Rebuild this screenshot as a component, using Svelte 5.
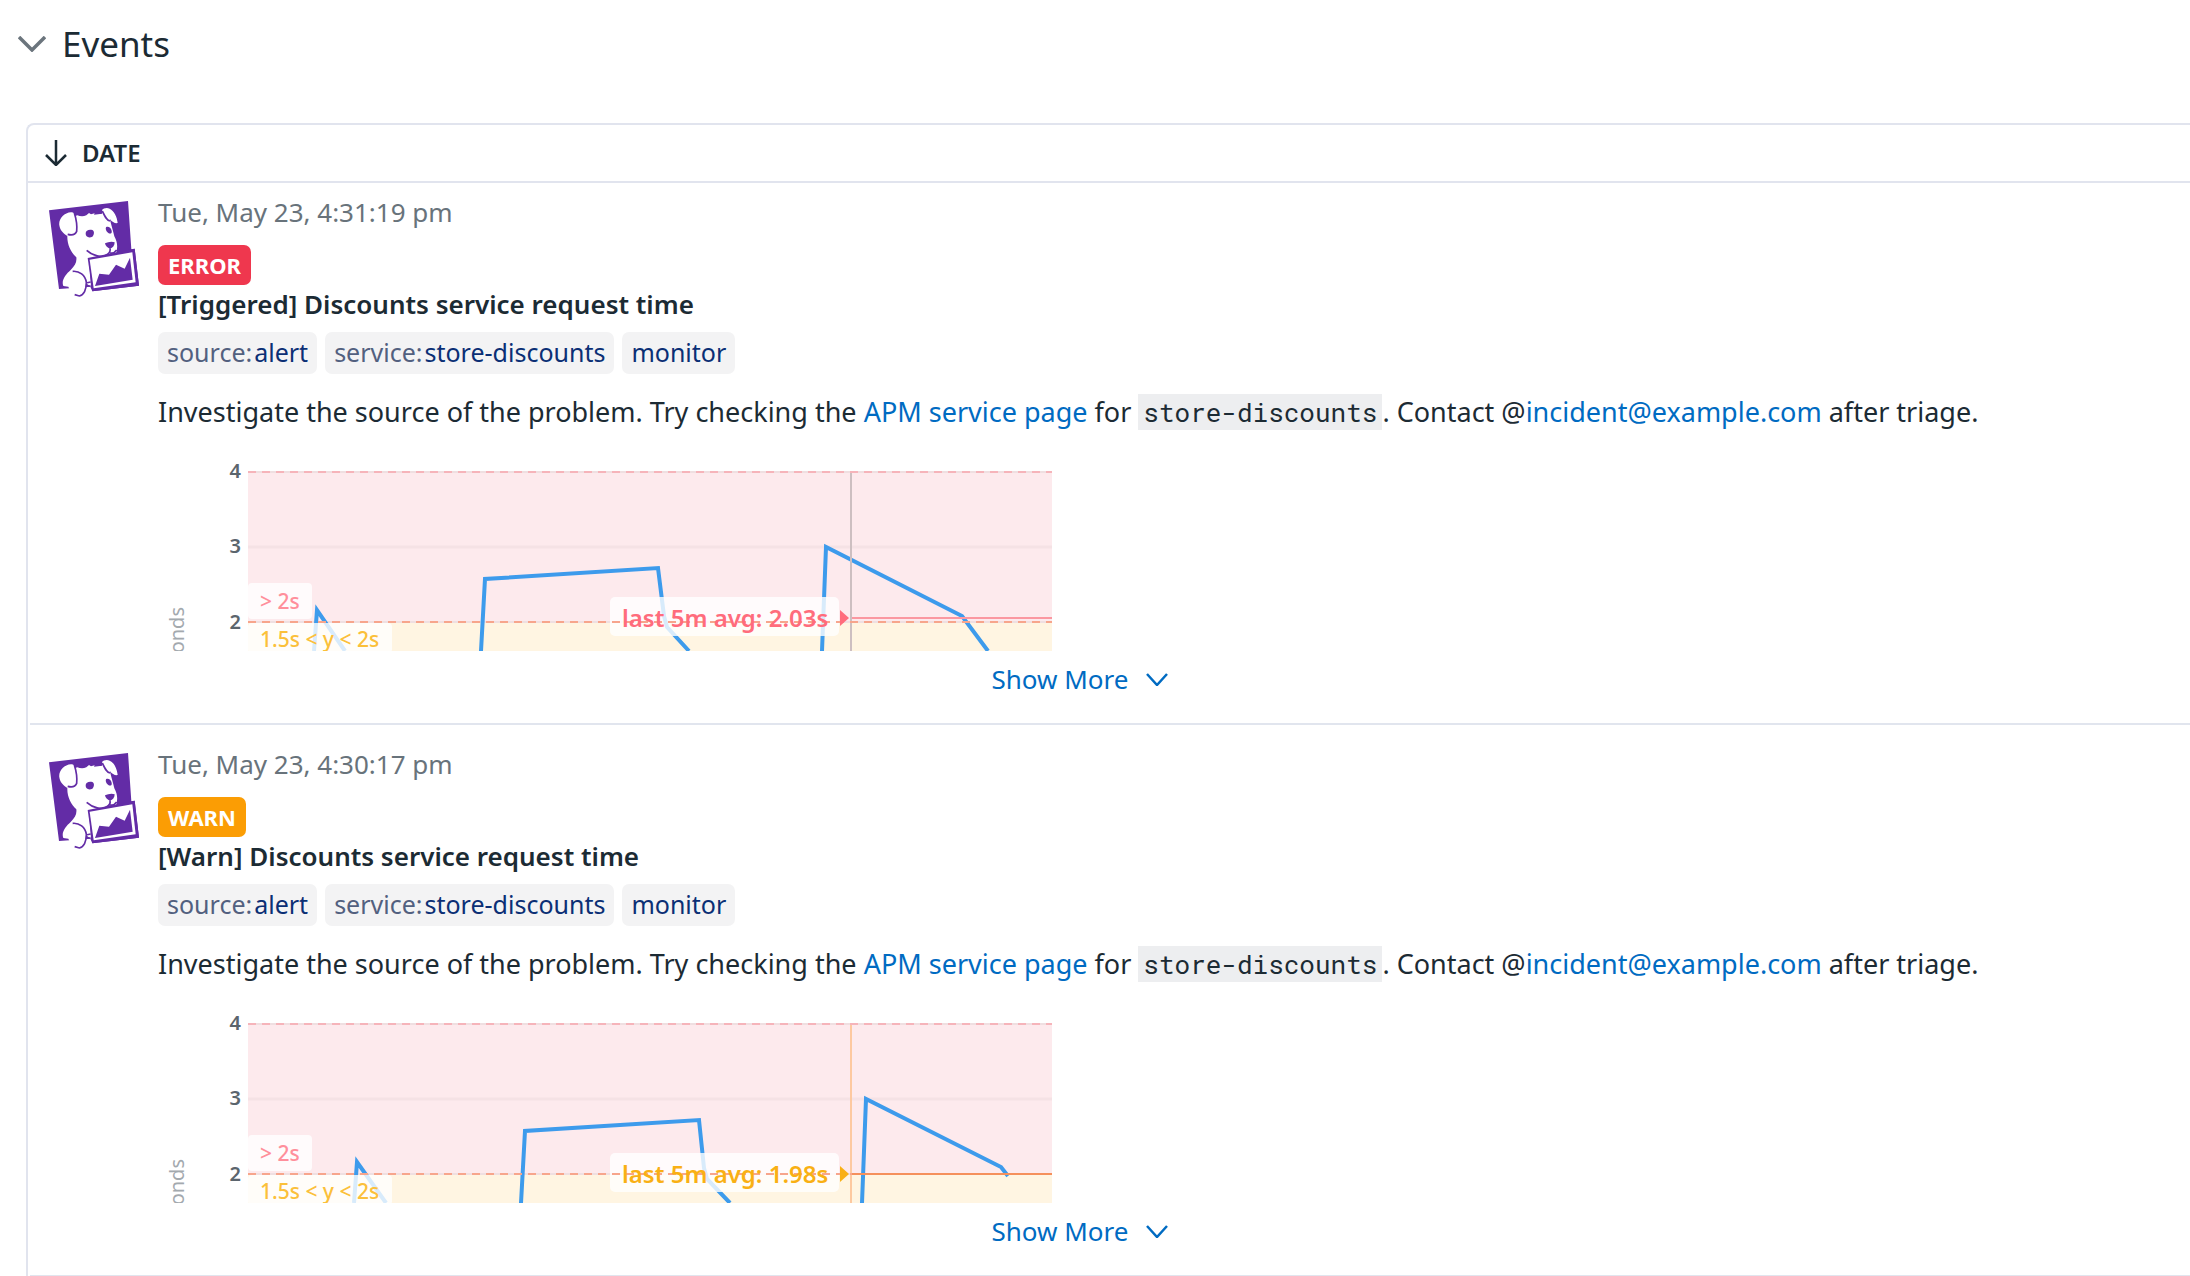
<script>
  const events = [
    {
      id: 'triggered',
      date: 'Tue, May 23, 4:31:19 pm',
      status: 'error',
      title: '[Triggered] Discounts service request time',
      chart: {
        series: [
          '156,195 159,154 187,195',
          '323,195 327,123 500,112 506,160 509,171 531,195',
          '664,195 668,91 804,160 830,195'
        ],
        average: 'last 5m avg: 2.03s',
        level: 162,
        boxTop: 141
      }
    },
    {
      id: 'warn',
      date: 'Tue, May 23, 4:30:17 pm',
      status: 'warn',
      title: '[Warn] Discounts service request time',
      chart: {
        series: [
          '196,195 199,154 228,195',
          '363,195 367,123 541,112 546,160 549,171 572,195',
          '704,195 708,91 843,159 850,168'
        ],
        average: 'last 5m avg: 1.98s',
        level: 166,
        boxTop: 145
      }
    }
  ];

  const tags = [
    { key: 'source:', value: 'alert' },
    { key: 'service:', value: 'store-discounts' },
    { key: '', value: 'monitor' }
  ];
</script>

{#snippet avatar()}
  <svg class="avatar" viewBox="84 60 276 294" aria-hidden="true">
    <path class="ink" d="M87 91 324 63 334 208 344 206 357 317 217 334 211 320 117 327Z" />
    <path class="paper" d="M118 136C115 118 132 98 153 97C160 96 163 100 166 108L172 106C180 109 190 110 199 106L207 99 213 103 224 100 222 104 240 102C247 104 249 97 246 90C250 84 262 82 269 86C282 92 291 109 293 129C286 131 276 126 269 116C274 135 279 151 283 169C293 187 293 202 289 219L275 222C263 227 250 231 236 232L207 236 213 320 198 310C196 328 188 341 172 343C158 340 149 332 145 320L130 318C123 301 137 283 152 270C164 257 171 248 169 232C154 218 141 195 142 168C130 161 120 151 118 136Z" />
    <path class="stroke" d="M163 99C169 118 172 135 170 154C165 166 154 166 143 163" />
    <path class="stroke" d="M247 93C255 110 260 121 270 123" />
    <path class="paper" d="M263 89C277 94 288 112 290 126C279 121 265 106 263 89Z" />
    <path class="ink" d="M197 160C197 151 207 147 217 150C224 153 223 165 217 170C207 175 196 171 197 160Z" />
    <path class="ink" d="M258 142C264 138 273 143 275 152C277 161 270 163 264 158C258 155 256 146 258 142Z" />
    <path class="ink" d="M255 190C264 186 275 183 284 187C284 197 278 204 270 206C262 203 256 198 255 190Z" />
    <path class="stroke" d="M200 211C218 227 246 235 259 225C267 221 272 214 270 205M270 218C276 221 284 218 290 210" />
    <path class="stroke" d="M158 274C178 272 196 286 199 307C200 329 191 345 178 348L164 344M198 309 212 306M200 318 212 318" />
    <path class="ink" d="M203 234 344 206 357 317 217 334Z" />
    <path class="paper" d="M209 239 337 217 347 307 221 325Z" />
    <path class="ink" d="M225 318 238 281 267 284 288 254 314 266 330 233 338 299Z" />
  </svg>
{/snippet}

{#snippet chart(event)}
  <svg
    class={['chart', event.status]}
    viewBox="0 0 894 195"
    role="img"
    aria-label="Request time in seconds, {event.chart.average}"
  >
    <rect class="zone-alert" x="90" y="16" width="804" height="150" />
    <rect class="zone-warn" x="90" y="166" width="804" height="29" />
    <path class="grid" d="M90 16H894M90 166H894" />
    <path class="grid wide" d="M90 91H894" />
    {#each event.chart.series as points}
      <polyline class="series" {points} />
    {/each}
    <path class="marker" d="M693 16V195" />
    <path class="level" d="M694 {event.chart.level}H894" />
    <rect class="plate" x="90" y="127" width="64" height="36" rx="4" />
    <rect class="plate" x="90" y="167" width="144" height="30" rx="4" />
    <rect class="plate" x="452" y={event.chart.boxTop} width="229" height="39" rx="5" />
    <path class="dash top" d="M90 16H894" />
    <path class="dash" d="M90 166H{event.status === 'warn' ? 694 : 894}" />
    <path class="pointer" d="M682 {event.chart.level - 8}L691 {event.chart.level}L682 {event.chart.level + 8}Z" />
    <text class="tick" x="83" y="22">4</text>
    <text class="tick" x="83" y="97">3</text>
    <text class="tick" x="83" y="173">2</text>
    <text class="unit" transform="translate(26 151) rotate(-90)">onds</text>
    <text class="range-alert" x="102" y="153">&gt; 2s</text>
    <text class="range-warn" x="102" y="191">1.5s &lt; y &lt; 2s</text>
    <text class="average" x="464" y={event.chart.boxTop + 30}>{event.chart.average}</text>
  </svg>
{/snippet}

<main>
  <h2>
    <button class="toggle" type="button" aria-expanded="true">
      <svg class="caret" viewBox="0 0 28 16" aria-hidden="true"><path d="M1 1 14 14 27 1" /></svg>
      Events
    </button>
  </h2>

  <table>
    <thead>
      <tr>
        <th scope="col" aria-sort="descending">
          <button class="sort" type="button">
            <svg class="arrow" viewBox="0 0 22 26" aria-hidden="true"><path d="M11 0V25M1 15 11 25 21 15" /></svg>
            DATE
          </button>
        </th>
      </tr>
    </thead>
    <tbody>
      {#each events as event (event.id)}
        <tr>
          <td>
            <article>
              {@render avatar()}
              <div class="body">
                <time>{event.date}</time>
                <span class={['badge', event.status]}>{event.status.toUpperCase()}</span>
                <h3>{event.title}</h3>
                <ul>
                  {#each tags as tag}
                    <li><span>{tag.key}</span>{tag.value}</li>
                  {/each}
                </ul>
                <p>
                  Investigate the source of the problem. Try checking the <a href="#apm">APM service page</a> for
                  <code>store-discounts</code>. Contact @<a href="mailto:incident@example.com">incident@example.com</a> after triage.
                </p>
                {@render chart(event)}
                <button class="more" type="button">
                  Show More
                  <svg viewBox="0 0 22 14" aria-hidden="true"><path d="M1 2 11 13 21 2" /></svg>
                </button>
              </div>
            </article>
          </td>
        </tr>
      {/each}
    </tbody>
  </table>
</main>

<style>
  :global(body) {
    margin: 0;
    background: #fff;
  }

  main {
    padding: 20px 0 0 18px;
    overflow: hidden;
    color: #1c2b34;
    font-family: 'Noto Sans', sans-serif;
    font-size: 26px;
    line-height: 36px;
  }

  h2,
  h3,
  p,
  ul {
    margin: 0;
    padding: 0;
  }

  button {
    display: flex;
    align-items: center;
    padding: 0;
    border: 0;
    background: none;
    color: inherit;
    font: inherit;
    cursor: pointer;
  }

  button path {
    fill: none;
    stroke: currentColor;
    stroke-width: 2.5;
  }

  h2 {
    margin-bottom: 55px;
    font-size: 35px;
    font-weight: 400;
    line-height: 48px;
  }

  .toggle {
    gap: 16px;
  }

  .caret {
    width: 28px;
    height: 16px;
    color: #6b757d;
  }

  .caret path {
    stroke-width: 3.5;
  }

  table {
    width: calc(100% - 8px);
    margin-left: 8px;
    border: solid #e1e4ee;
    border-width: 2px 0 0 2px;
    border-radius: 8px 0 0 0;
    border-spacing: 0;
  }

  th {
    height: 56px;
    padding: 0 0 0 17px;
    border-bottom: 2px solid #e1e4ee;
    font-size: 24px;
    font-weight: 600;
  }

  .sort {
    gap: 15px;
  }

  .arrow {
    width: 22px;
    height: 26px;
  }

  td {
    padding: 0 0 0 2px;
  }

  article {
    display: flex;
    align-items: flex-start;
    gap: 18px;
    padding: 21px 0 26px 18px;
    border-bottom: 2px solid #e1e5ee;
  }

  tr:first-child article {
    padding-top: 11px;
  }

  .avatar {
    flex: none;
    width: 92px;
    height: 98px;
    margin-top: 6px;
  }

  .ink {
    fill: #632ca6;
  }

  .paper {
    fill: #fff;
  }

  .stroke {
    fill: none;
    stroke: #632ca6;
    stroke-width: 5;
  }

  .body {
    display: flex;
    flex: 1;
    flex-direction: column;
    align-items: flex-start;
    max-width: 1844px;
  }

  time {
    color: #68737b;
  }

  .badge {
    margin-top: 15px;
    padding: 0 10px;
    border-radius: 7px;
    color: #fff;
    font-size: 22px;
    font-weight: 700;
    line-height: 40px;
  }

  .badge.error {
    background: #ef374e;
  }

  .badge.warn {
    background: #fb9d04;
  }

  h3 {
    margin-top: 1px;
    font-size: 26px;
    font-weight: 600;
  }

  ul {
    display: flex;
    gap: 8px;
    margin-top: 10px;
    list-style: none;
  }

  li {
    padding: 0 9px 2px;
    border-radius: 7px;
    background: #f3f3f4;
    color: #0b2f75;
    font-size: 25px;
    line-height: 40px;
  }

  li span {
    margin-right: 2px;
    color: #52607f;
  }

  li span:empty {
    display: none;
  }

  p {
    margin-top: 18px;
    font-size: 27px;
    line-height: 40px;
  }

  a {
    color: #006bc2;
    text-decoration: none;
  }

  code {
    padding: 1px 5px;
    background: #edeef0;
    font-family: 'Roboto Mono', 'Liberation Mono', monospace;
    font-size: 26px;
  }

  .more {
    align-self: center;
    gap: 18px;
    margin-top: 10px;
    color: #006bc2;
  }

  .more svg {
    width: 22px;
    height: 14px;
  }

  .chart {
    width: 894px;
    max-width: 100%;
    margin-top: 24px;
    font-size: 20px;
    font-weight: 500;
  }

  .chart.error {
    --accent: #ff6c7c;
    --marker: #cdbfc1;
    --level: #fb98a1;
  }

  .chart.warn {
    --accent: #f9b014;
    --marker: #fdc9a0;
    --level: #f5905c;
  }

  .zone-alert {
    fill: #fdeaed;
  }

  .zone-warn {
    fill: #fff5e2;
  }

  .grid {
    stroke: #efdfe1;
    stroke-width: 2;
  }

  .grid.wide {
    stroke: #f5e2e5;
    stroke-width: 3;
  }

  .series {
    fill: none;
    stroke: #3d9bec;
    stroke-width: 4;
  }

  .marker {
    stroke: var(--marker);
    stroke-width: 2;
  }

  .level {
    stroke: var(--level);
    stroke-width: 2;
  }

  .plate {
    fill: #fff;
    fill-opacity: 0.8;
  }

  .dash {
    stroke: #f7a58c;
    stroke-width: 2;
    stroke-dasharray: 8 6;
  }

  .dash.top {
    stroke: #f6b4ba;
  }

  .pointer,
  .average {
    fill: var(--accent);
  }

  .average {
    font-size: 24px;
    font-weight: 600;
  }

  .tick {
    fill: #5b656d;
    font-weight: 600;
    text-anchor: end;
  }

  .unit {
    fill: #a3a9ae;
    text-anchor: end;
    font-weight: 400;
  }

  .range-alert,
  .range-warn {
    font-size: 21px;
  }

  .range-alert {
    fill: #ff8f9b;
  }

  .range-warn {
    fill: #fbc03a;
  }
</style>
